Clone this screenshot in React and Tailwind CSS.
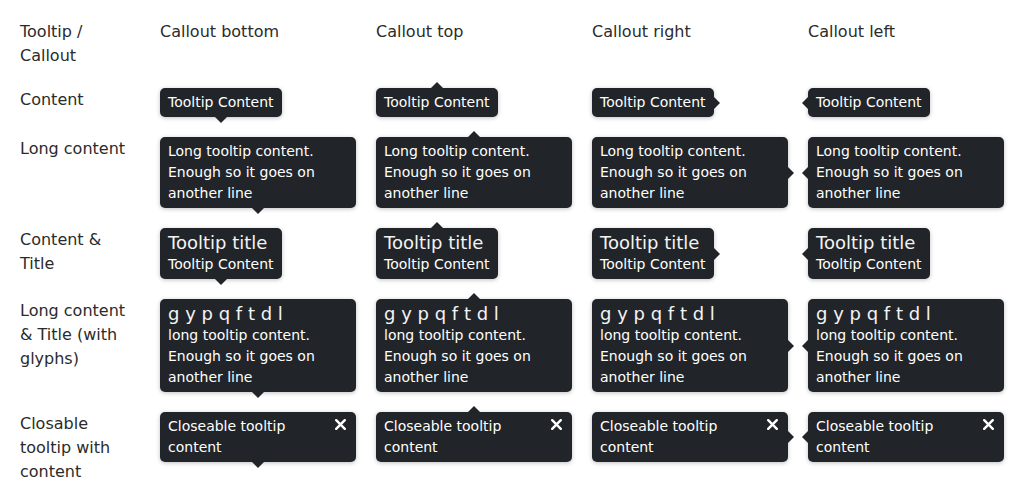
import React from "react";

const BG = "bg-[#212529]";

function Arrow({ dir }) {
  if (dir === "bottom")
    return <span className="absolute left-1/2 top-full h-0 w-0 -translate-x-1/2 border-x-[6px] border-t-[6px] border-x-transparent border-t-[#212529]" />;
  if (dir === "top")
    return <span className="absolute left-1/2 bottom-full h-0 w-0 -translate-x-1/2 border-x-[6px] border-b-[6px] border-x-transparent border-b-[#212529]" />;
  if (dir === "right")
    return <span className="absolute left-full top-1/2 h-0 w-0 -translate-y-1/2 border-y-[6px] border-l-[6px] border-y-transparent border-l-[#212529]" />;
  return <span className="absolute right-full top-1/2 h-0 w-0 -translate-y-1/2 border-y-[6px] border-r-[6px] border-y-transparent border-r-[#212529]" />;
}

function Tip({ dir, title, closable, children }) {
  return (
    <div className={`relative w-fit max-w-[196px] rounded-[5px] ${BG} px-2 py-1 text-[14px] leading-[21px] text-white shadow-[0_1px_4px_rgba(0,0,0,0.25)]`}>
      {closable ? (
        <div className="flex gap-2">
          <div className="flex-1">{children}</div>
          <button className="mt-[3px] flex h-[16px] w-[16px] items-start justify-center self-start text-white">
            <svg width="11" height="11" viewBox="0 0 11 11">
              <path d="M1.2 1.2 L9.8 9.8 M9.8 1.2 L1.2 9.8" stroke="white" strokeWidth="2.4" strokeLinecap="round" />
            </svg>
          </button>
        </div>
      ) : (
        <>
          {title && <div className="text-[18px] leading-[22px] text-[#f4f4f4]">{title}</div>}
          <div>{children}</div>
        </>
      )}
      <Arrow dir={dir} />
    </div>
  );
}

const dirs = ["bottom", "top", "right", "left"];
const LONG = "Enough so it goes on another line";

const rows = [
  { label: "Content", render: (d) => <Tip dir={d}>Tooltip Content</Tip> },
  { label: "Long content", render: (d) => <Tip dir={d}>Long tooltip content. {LONG}</Tip> },
  { label: "Content & Title", render: (d) => <Tip dir={d} title="Tooltip title">Tooltip Content</Tip> },
  {
    label: "Long content & Title (with glyphs)",
    render: (d) => (
      <Tip dir={d} title="g y p q f t d l">
        long tooltip content. {LONG}
      </Tip>
    ),
  },
  { label: "Closable tooltip with content", render: (d) => <Tip dir={d} closable>Closeable tooltip content</Tip> },
];

export default function App() {
  return (
    <div className="min-h-[503px] w-[1024px] bg-white pt-5 text-[16px] leading-6 text-[#2b2b2b]" style={{ fontFamily: '"DejaVu Sans", sans-serif' }}>
      <div className="grid grid-cols-[160px_216px_216px_216px_216px] gap-y-5">
        <div className="pl-5 pr-[30px]">Tooltip / Callout</div>
        <div>Callout bottom</div>
        <div>Callout top</div>
        <div>Callout right</div>
        <div>Callout left</div>
        {rows.map((r) => (
          <React.Fragment key={r.label}>
            <div className="pl-5 pr-[30px]">{r.label}</div>
            {dirs.map((d) => (
              <div key={d}>{r.render(d)}</div>
            ))}
          </React.Fragment>
        ))}
      </div>
    </div>
  );
}
